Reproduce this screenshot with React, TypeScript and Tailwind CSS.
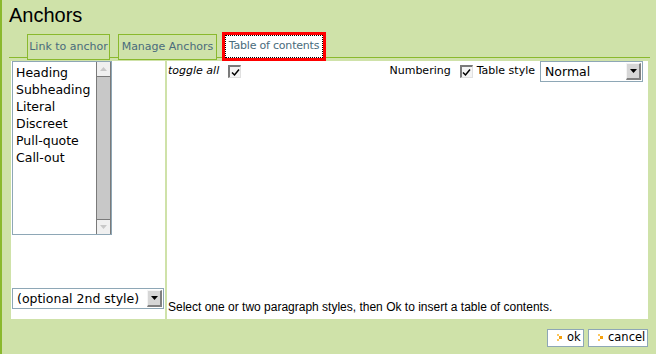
import React from "react";

const dv = { fontFamily: '"DejaVu Sans", sans-serif' } as const;

function CheckBox() {
  return (
    <div className="w-[13px] h-[13px] bg-[#f4f4f4] border-t-2 border-l-2 border-[#7a7a7a] border-b border-r border-b-[#e0e0e0] border-r-[#e0e0e0] flex items-center justify-center">
      <svg width="9" height="9" viewBox="0 0 9 9">
        <path d="M1 4.5 L3.5 7 L8 1.5" fill="none" stroke="#000" strokeWidth="1.5" />
      </svg>
    </div>
  );
}

function DropBtn() {
  return (
    <div className="w-[15px] h-[17px] bg-[#d6d6d6] border-t border-l border-[#f4f4f4] border-b-2 border-r-2 border-b-[#808080] border-r-[#808080] flex items-center justify-center">
      <svg width="7" height="4" viewBox="0 0 7 4">
        <path d="M0 0 L7 0 L3.5 4 Z" fill="#000" />
      </svg>
    </div>
  );
}

function BtnIcon() {
  return (
    <svg width="6" height="8" viewBox="0 0 6 8" className="shrink-0">
      <rect x="0" y="0" width="2" height="2" fill="#fbc760" />
      <rect x="2" y="2" width="3" height="3" fill="#f5a10f" />
      <rect x="0" y="5" width="2" height="2" fill="#fbc760" />
    </svg>
  );
}

export default function App() {
  const items = ["Heading", "Subheading", "Literal", "Discreet", "Pull-quote", "Call-out"];
  return (
    <div className="w-[656px] h-[354px] bg-[#cfe2a9] border-l-2 border-[#8ab92d] flex flex-col overflow-hidden">
      <div
        className="h-[30px] pl-[7px] pt-[3px] text-[20px] leading-[24px] text-black"
        style={{ fontFamily: '"Liberation Sans", Arial, sans-serif' }}
      >
        Anchors
      </div>

      <div className="ml-[7px] w-[641px] h-[28px] border-b border-[#8ab92d] flex items-end pl-[18px]" style={dv}>
        <div className="relative z-10 mb-[-3px] h-[26px] w-[83px] border border-[#8ab92d] bg-[#cfe2a9] flex items-center justify-center text-[11px] text-[#4a6b7c]">
          Link to anchor
        </div>
        <div className="relative z-10 ml-[8px] mb-[-3px] h-[26px] w-[99px] border border-[#8ab92d] bg-[#cfe2a9] flex items-center justify-center text-[11px] text-[#4a6b7c]">
          Manage Anchors
        </div>
        <div className="relative z-10 ml-[5px] mb-[-4px] h-[29px] w-[104px] border-[3px] border-[#ff0000] bg-white p-0">
          <div className="h-full w-full border border-dotted border-black flex items-center justify-center text-[11px] text-[#4a6b7c] tracking-[-0.2px]">
            Table of contents
          </div>
        </div>
      </div>

      <div className="ml-[9px] mt-[3px] w-[637px] h-[258px] flex gap-[2px]">
        <div className="w-[154px] bg-white flex flex-col">
          <div className="ml-[1px] w-[100px] h-[174px] border border-[#8ea7b6] flex bg-white">
            <div className="flex-1 pl-[3px] pt-[2px] text-[12.5px] leading-[17px] text-black" style={dv}>
              {items.map((t) => (
                <div key={t}>{t}</div>
              ))}
            </div>
            <div className="w-[15px] flex flex-col border-l border-r border-[#7a7a7a] bg-[#c8c8c8]">
              <div className="h-[15px] bg-[#f0f0f0] border-b border-[#7a7a7a] flex items-center justify-center">
                <svg width="7" height="4" viewBox="0 0 7 4">
                  <path d="M0 4 L7 4 L3.5 0 Z" fill="#c8c8c8" />
                </svg>
              </div>
              <div className="flex-1" />
              <div className="h-[15px] bg-[#f0f0f0] border-t border-[#7a7a7a] flex items-center justify-center">
                <svg width="7" height="4" viewBox="0 0 7 4">
                  <path d="M0 0 L7 0 L3.5 4 Z" fill="#c8c8c8" />
                </svg>
              </div>
            </div>
          </div>
          <div className="mt-auto mb-[10px] ml-[1px] w-[152px] h-[21px] border border-[#8ea7b6] bg-white flex items-center pl-[4px] pr-[1px]">
            <span className="flex-1 text-[12.5px] leading-[17px] text-black" style={dv}>
              (optional 2nd style)
            </span>
            <DropBtn />
          </div>
        </div>

        <div className="flex-1 bg-white flex flex-col">
          <div className="h-[21px] flex items-center text-[11px] text-black" style={dv}>
            <span className="ml-[1px] italic">toggle all</span>
            <div className="ml-[9px]">
              <CheckBox />
            </div>
            <span className="ml-auto">Numbering</span>
            <div className="ml-[9px]">
              <CheckBox />
            </div>
            <span className="ml-[4px]">Table style</span>
            <div className="ml-[5px] mr-[5px] w-[103px] h-[21px] border border-[#8ea7b6] bg-white flex items-center pl-[4px] pr-[1px] self-start">
              <span className="flex-1 text-[12.5px] leading-[17px]">Normal</span>
              <DropBtn />
            </div>
          </div>
          <div
            className="mt-auto mb-[4px] ml-[1px] text-[12px] leading-[15px] text-black"
            style={{ fontFamily: '"Liberation Sans", Arial, sans-serif' }}
          >
            Select one or two paragraph styles, then Ok to insert a table of contents.
          </div>
        </div>
      </div>

      <div className="mt-[10px] mr-[8px] flex justify-end gap-[4px] text-[11.5px] text-black" style={dv}>
        <div className="h-[18px] w-[37px] border border-[#8ea7b6] bg-white flex items-center pl-[9px] gap-[4px]">
          <BtnIcon />
          <span>ok</span>
        </div>
        <div className="h-[18px] w-[60px] border border-[#8ea7b6] bg-white flex items-center pl-[9px] gap-[4px]">
          <BtnIcon />
          <span>cancel</span>
        </div>
      </div>
    </div>
  );
}
